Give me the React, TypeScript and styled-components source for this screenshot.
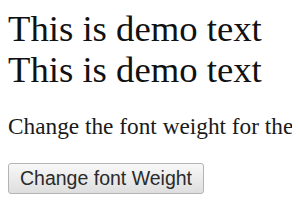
import React from 'react';
import styled, {createGlobalStyle} from 'styled-components';

const GlobalStyle = createGlobalStyle`
    body {
        margin: 8px;
        background: #ffffff;
        font-family: 'Liberation Serif', 'Times New Roman', serif;
        color: #111;
        overflow: hidden;
    }
`;

const Demo = styled.div`
    font-size: 36.7px;
    line-height: 41px;
    white-space: nowrap;
    color: #111;
`;

const Note = styled.p`
    font-size: 23.3px;
    margin: 23px 0;
    white-space: nowrap;
    color: #1a1a1a;
`;

const WeightButton = styled.button`
    font-family: 'Liberation Sans', Arial, sans-serif;
    font-size: 19.5px;
    color: #2a2a2a;
    height: 31px;
    padding: 0 11px;
    border: 1px solid #b4b4b4;
    border-radius: 3px;
    background: linear-gradient(#f8f8f8, #dedede);
    display: block;
`;

const App = (): JSX.Element => {
    return (
        <>
            <GlobalStyle />
            <Demo>This is demo text</Demo>
            <Demo>This is demo text</Demo>
            <Note>Change the font weight for the</Note>
            <WeightButton>Change font Weight</WeightButton>
        </>
    );
};
export default App;
